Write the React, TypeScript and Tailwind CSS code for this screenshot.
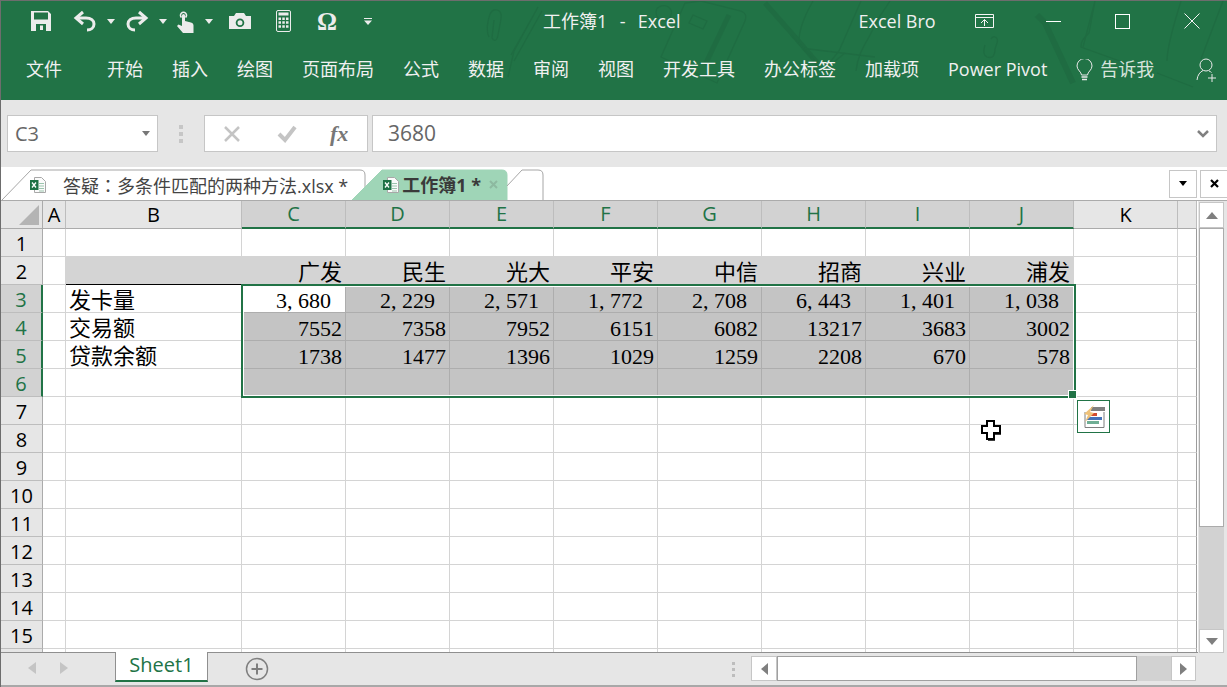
import React from 'react';

const uiFont = 'font-["Open_Sans","Noto_Sans_CJK_SC",sans-serif]';
const cellFont = 'font-["Liberation_Serif","Noto_Sans_CJK_SC",serif]';

const ribbonTabs = ['开始', '插入', '绘图', '页面布局', '公式', '数据', '审阅', '视图', '开发工具', '办公标签', '加载项', 'Power Pivot'];
const columns = ['C', 'D', 'E', 'F', 'G', 'H', 'I', 'J'];
const rowNumbers = [1, 2, 3, 4, 5, 6, 7, 8, 9, 10, 11, 12, 13, 14, 15];

const banks = ['广发', '民生', '光大', '平安', '中信', '招商', '兴业', '浦发'];
const cards = ['3, 680', '2, 229', '2, 571', '1, 772', '2, 708', '6, 443', '1, 401', '1, 038'];
const volume = ['7552', '7358', '7952', '6151', '6082', '13217', '3683', '3002'];
const loans = ['1738', '1477', '1396', '1029', '1259', '2208', '670', '578'];

const Caret = ({ className = '' }: { className?: string }) => (
  <svg width="8" height="5" viewBox="0 0 8 5" className={className}>
    <path d="M0 0h8L4 5z" fill="currentColor" />
  </svg>
);

const SaveIcon = () => (
  <svg width="20" height="20" viewBox="0 0 20 20">
    <path fillRule="evenodd" fill="#ececec" d="M0 0h17l3 3v17H0zM3 1.500v7h14v-7zM5 13v7h10v-7zM9 14.500h3V19H9z" />
  </svg>
);

const UndoIcon = () => (
  <svg width="24" height="22" viewBox="0 0 24 22" fill="none" stroke="#ececec" strokeWidth="3">
    <path d="M10 2 3 8l7 6" />
    <path d="M4 8h9c5 0 8 2.500 8 6s-3 6-7 6" />
  </svg>
);

const RedoIcon = () => (
  <svg width="24" height="22" viewBox="0 0 24 22" fill="none" stroke="#ececec" strokeWidth="3">
    <path d="m14 2 7 6-7 6" />
    <path d="M20 8h-9c-5 0-8 2.500-8 6s3 6 7 6" />
  </svg>
);

const TouchIcon = () => (
  <svg width="18" height="24" viewBox="0 0 18 24">
    <path d="M5.500 8.500a3 3 0 1 1 4 0" fill="none" stroke="#ececec" strokeWidth="1.600" />
    <path fill="#ececec" d="M6 6.500a1.500 1.500 0 0 1 3 0V12l6 1.500c1.500.4 2.500 1.500 2.500 3V24H7l-6-7 1.500-1.500L6 17z" />
  </svg>
);

const CameraIcon = () => (
  <svg width="22" height="18" viewBox="0 0 22 18">
    <path fillRule="evenodd" fill="#ececec" d="M0 4h5l2-3h8l2 3h5v13H0zM11 6.500a4.300 4.300 0 1 0 0 8.600 4.300 4.300 0 0 0 0-8.600zM11 8.300a2.500 2.500 0 1 1 0 5 2.500 2.500 0 0 1 0-5z" />
  </svg>
);

const CalculatorIcon = () => (
  <svg width="15" height="22" viewBox="0 0 15 22">
    <rect x=".5" y=".5" width="14" height="21" rx="1.500" fill="none" stroke="#ececec" />
    <path fill="#ececec" d="M2.500 2.500h10v3h-10zM2.500 7.500h2.500v2.500H2.500zM6.300 7.500h2.500v2.500H6.300zM10 7.500h2.500v2.500H10zM2.500 11.300h2.500v2.500H2.500zM6.300 11.300h2.500v2.500H6.300zM10 11.300h2.500v2.500H10zM2.500 15.200h2.500v2.500H2.500zM6.300 15.200h2.500v2.500H6.300zM10 15.200h2.500v2.500H10z" />
  </svg>
);

const ExcelDoc = () => (
  <svg width="16" height="16" viewBox="0 0 16 16" className="shrink-0">
    <path d="M4.500.5h7l4 4v11h-11z" fill="#fbfbfb" stroke="#a8a8a8" />
    <path d="M9 6.500h5M9 9h5M9 11.500h5M9 14h5" stroke="#9cc5ae" strokeWidth="1.200" />
    <rect x="0" y="3" width="8.500" height="10" fill="#1e7145" />
    <path d="m2 5.500 4 5m0-5-4 5" stroke="#fff" strokeWidth="1.300" />
  </svg>
);

const Watermark = () => (
  <svg className="absolute inset-0 pointer-events-none" width="1227" height="99" viewBox="0 0 1227 99" fill="none" stroke="#1f6c42" strokeWidth="1.300">
    <path d="M488 36c-4-8 0-26 5-27s8 2 7 9l-3 16c-1 6-4 7-6 3l2-18" />
    <path d="m537 6-24 44-6 26m29-68-26 46m31-44-28 50" />
    <path d="M658 6c8-4 14 2 12 8s-8 8-12 4-4-10 0-12z" />
    <path d="m684 2-24 54 56 26 28-62c2-6 0-8-4-10l-40-10z" />
    <path d="m728 14-24 50" strokeWidth="5" />
    <path d="m692 14 14 6-4 8-14-6z" />
    <path d="m764 2 30 34 24 28" strokeWidth="5" />
    <path d="m790 34 22 24 4 6" />
    <path d="M812 0c-8 14-14 30-14 40 0 4 4 8 10 8l66 8" />
    <path d="m860 0-22 50-16 20m22-18-22 18" />
    <path d="M889 0c-6 10-12 16-16 26-6 14-16 24-18 44" />
    <path d="M984 44c-2 6-2 10 2 12 6 2 8-2 8-8l2-6c2-6-4-8-6-4" />
    <path d="m1036 14 8 8 28 60" strokeWidth="6" />
    <path d="m1094 0-6 32c-6 6-8 8-8 14l72 26m-58-72-12 46" />
    <path d="M1180 0c-6 20-14 44-14 60m-10 12 36 14m30-86-22 58" />
  </svg>
);

const TabShapes = () => (
  <svg className="absolute left-0 top-0 pointer-events-none" width="560" height="33" viewBox="0 0 560 33">
    <path d="M1 33 30 3h329q5 0 5 5v25" fill="#fff" stroke="#a6a6a6" />
    <path d="M351 33 381 3h120q5 0 5 5v25z" fill="#9fd5b7" stroke="#9fd5b7" />
    <path d="m506 19 15-16h16q5 0 5 5v25" fill="#fff" stroke="#a6a6a6" />
  </svg>
);

const ColHeader = ({ label, w, active }: { label: string; w: string; active?: boolean }) => (
  <div
    className={`${w} shrink-0 border-r flex items-center justify-center text-[20px] ${
      active
        ? 'bg-[#d2d2d2] text-[#217346] border-[#bdbdbd] border-b-2 border-b-[#217346]'
        : 'bg-[#e6e6e6] text-black border-[#bdbdbd] border-b border-b-[#ababab]'
    }`}
  >
    {label}
  </div>
);

const Cell = ({ children, className = '' }: { children?: React.ReactNode; className?: string }) => (
  <div className={`shrink-0 h-full border-r border-b flex items-center overflow-hidden whitespace-nowrap pt-[4px] text-[22px] leading-none ${cellFont} ${className}`}>
    {children}
  </div>
);

const DataCells = ({ row }: { row: number }) => {
  if (row === 2) {
    return (
      <>
        {banks.map((b) => (
          <Cell key={b} className="w-[104px] bg-[#d4d4d4] border-[#d4d4d4] justify-end pr-[3px]">{b}</Cell>
        ))}
      </>
    );
  }
  if (row >= 3 && row <= 6) {
    const values = row === 3 ? cards : row === 4 ? volume : row === 5 ? loans : null;
    return (
      <>
        {columns.map((c, i) => (
          <Cell
            key={c}
            className={`w-[104px] justify-end border-[#adadad] ${row === 3 ? 'pr-[14px]' : 'pr-[3px]'} ${row === 3 && i === 0 ? 'bg-white' : 'bg-[#c4c4c4]'}`}
          >
            {values ? values[i] : ''}
          </Cell>
        ))}
      </>
    );
  }
  return (
    <>
      {columns.map((c) => (
        <Cell key={c} className="w-[104px] border-[#d4d4d4]" />
      ))}
    </>
  );
};

const rowLabels: Record<number, string> = { 3: '发卡量', 4: '交易额', 5: '贷款余额' };

const SheetRow = ({ row, label }: { row: number; label?: boolean }) => {
  const active = row >= 3 && row <= 6;
  return (
    <div className="flex h-[28px]">
      <div
        className={`w-[42px] shrink-0 flex items-center justify-center border-b pt-[2px] text-[20px] ${uiFont} ${
          active
            ? 'bg-[#d2d2d2] text-[#217346] border-b-[#bdbdbd] border-r-2 border-r-[#217346]'
            : 'bg-[#e6e6e6] text-black border-b-[#bdbdbd] border-r border-r-[#ababab]'
        }`}
      >
        {label ? row : ''}
      </div>
      <Cell className={`w-[23px] border-[#d4d4d4]`} />
      <Cell
        className={`w-[176px] pl-[3px] ${
          row === 2 ? 'bg-[#d4d4d4] border-r-[#d4d4d4] border-b-black' : 'border-[#d4d4d4]'
        }`}
      >
        {rowLabels[row]}
      </Cell>
      <DataCells row={row} />
      <Cell className="w-[104px] border-[#d4d4d4]" />
      <Cell className="w-[19px] border-[#d4d4d4] border-r-[#9c9c9c]" />
    </div>
  );
};

export default function App() {
  return (
    <div className={`w-[1227px] h-[687px] overflow-hidden flex flex-col bg-[#e6e6e6] border-l border-t border-[#6d6d6d] ${uiFont}`}>
      {/* Ribbon */}
      <div className="relative h-[99px] shrink-0 bg-[#217346] text-[#f0f0f0] text-[18px]">
        <Watermark />
        <div className="relative flex items-center h-[40px]">
          <div className="w-[30px]" />
          <SaveIcon />
          <div className="w-[22px]" />
          <UndoIcon />
          <Caret className="ml-[10px] text-[#ececec]" />
          <div className="w-[10px]" />
          <RedoIcon />
          <Caret className="ml-[10px] text-[#ececec]" />
          <div className="w-[9px]" />
          <TouchIcon />
          <Caret className="ml-[11px] text-[#ececec]" />
          <div className="w-[16px]" />
          <CameraIcon />
          <div className="w-[25px]" />
          <CalculatorIcon />
          <div className="w-[26px]" />
          <span className={`w-[22px] text-[25px] leading-none text-[#ececec] font-bold ${cellFont}`}>Ω</span>
          <div className="w-[25px]" />
          <svg width="8" height="7" viewBox="0 0 8 7">
            <path d="M0 0h8v1H0zM0 2.500h8L4 7z" fill="#ececec" />
          </svg>
          <span className="ml-[171px] whitespace-pre">工作簿1<span className="mx-[3px]">  -  </span>Excel</span>
          <span className="ml-[178px]">Excel Bro</span>
          <svg className="ml-[39px]" width="20" height="15" viewBox="0 0 20 15" fill="none" stroke="#f5f5f5">
            <path d="M.5.500h18v13H.5zM.5 3.500h18M9.500 12V5.500M6 9l3.500-3.500L13 9" />
          </svg>
          <div className="ml-[51px] w-[15px] h-px bg-white" />
          <div className="ml-[54px] w-[15px] h-[15px] border border-white" />
          <svg className="ml-[54px]" width="16" height="16" viewBox="0 0 16 16" stroke="#f5f5f5">
            <path d="m.5.500 15 15m0-15-15 15" />
          </svg>
        </div>
        <div className="relative flex items-center h-[59px] pb-[2px]">
          <span className="ml-[25px]">文件</span>
          <div className="ml-[45px] flex gap-[29px]">
            {ribbonTabs.map((t) => (
              <span key={t} className="whitespace-nowrap">{t}</span>
            ))}
          </div>
          <svg className="ml-[29px]" width="17" height="22" viewBox="0 0 17 22" fill="none" stroke="#e9e9e9">
            <path d="M5.500 16c0-3-4.500-5-4.500-9a7.500 7.500 0 0 1 15 0c0 4-4.500 6-4.500 9z" />
            <path d="M5.500 18h6M6 20.500h5" strokeWidth="1.500" />
          </svg>
          <span className="ml-[7px] text-[#d7e4dc]">告诉我</span>
          <svg className="ml-[42px]" width="22" height="24" viewBox="0 0 22 24" fill="none" stroke="#e9e9e9">
            <circle cx="10" cy="7" r="6" />
            <path d="M1 22c.5-5 3-8 6-9.500M13 13c1 .3 2 1 2.500 1.500M16 16v8M12 20h8" />
          </svg>
        </div>
      </div>

      {/* Formula bar */}
      <div className="h-[67px] shrink-0 flex items-center pl-[6px] pr-[10px] text-[20px] text-[#666]">
        <div className="w-[151px] h-[37px] bg-white border border-[#c6c6c6] flex items-center justify-between pl-[7px] pr-[7px]">
          <span>C3</span>
          <Caret className="text-[#777]" />
        </div>
        <div className="w-[46px] flex flex-col items-center gap-[3px]">
          <div className="w-[4px] h-[4px] bg-[#c6c6c6]" />
          <div className="w-[4px] h-[4px] bg-[#c6c6c6]" />
          <div className="w-[4px] h-[4px] bg-[#c6c6c6]" />
        </div>
        <div className="w-[164px] h-[37px] bg-white border border-[#c6c6c6] flex items-center">
          <svg className="ml-[18px]" width="18" height="18" viewBox="0 0 18 18" stroke="#c4c4c4" strokeWidth="2.500">
            <path d="m2 2 14 14m0-14L2 16" />
          </svg>
          <svg className="ml-[36px]" width="20" height="18" viewBox="0 0 20 18" fill="none" stroke="#c4c4c4" strokeWidth="4">
            <path d="m2 9 6 6L18 2" />
          </svg>
          <span className={`ml-[33px] text-[22px] font-bold italic leading-none text-[#777] ${cellFont}`}>fx</span>
        </div>
        <div className="ml-[4px] flex-1 h-[37px] bg-white border border-[#c6c6c6] flex items-center justify-between pl-[15px] pr-[7px] text-[21px]">
          <span>3680</span>
          <svg width="12" height="8" viewBox="0 0 12 8" fill="none" stroke="#808080" strokeWidth="2.500">
            <path d="m1 1 5 5 5-5" />
          </svg>
        </div>
      </div>

      {/* Workbook tabs */}
      <div className="relative h-[34px] shrink-0 bg-white border-b border-[#ababab]">
        <TabShapes />
        <div className="relative flex items-center h-full text-[18px] text-[#444]">
          <div className="ml-[29px] mt-[2px]"><ExcelDoc /></div>
          <span className="ml-[17px] mt-[4px] whitespace-nowrap">
            答疑<span className='font-["Noto_Sans_CJK_TC",sans-serif]'>：</span>多条件匹配的两种方法.xlsx *
          </span>
          <div className="ml-[35px] mt-[2px]"><ExcelDoc /></div>
          <span className="ml-[3px] mt-[4px] font-bold text-[#3a3a3a] whitespace-nowrap">工作簿1 *</span>
          <svg className="ml-[8px] mt-[2px]" width="9" height="9" viewBox="0 0 9 9" stroke="#8db9a0" strokeWidth="2">
            <path d="m1 1 7 7m0-7-7 7" />
          </svg>
          <div className="ml-auto mr-[3px] w-[28px] h-[28px] bg-white border border-[#c6c6c6] flex items-center justify-center">
            <Caret className="text-black" />
          </div>
          <div className="mr-[-1px] w-[28px] h-[28px] bg-white border border-[#c6c6c6] flex items-center justify-center">
            <svg width="9" height="9" viewBox="0 0 9 9" stroke="#000" strokeWidth="2.200">
              <path d="m1 1 7 7m0-7-7 7" />
            </svg>
          </div>
        </div>
      </div>

      {/* Sheet + vertical scrollbar */}
      <div className="h-[452px] shrink-0 flex bg-white">
        <div className="w-[1197px] shrink-0 flex flex-col overflow-hidden border-b border-[#8f8f8f]">
          <div className="flex h-[28px] shrink-0">
            <div className="w-[42px] shrink-0 bg-[#e6e6e6] border-r border-b border-[#ababab] flex items-end justify-end pr-[3px] pb-[3px]">
              <svg width="20" height="20" viewBox="0 0 20 20">
                <path d="M20 0v20H0z" fill="#b4b4b4" />
              </svg>
            </div>
            <ColHeader label="A" w="w-[23px]" />
            <ColHeader label="B" w="w-[176px]" />
            {columns.map((c) => (
              <ColHeader key={c} label={c} w="w-[104px]" active />
            ))}
            <ColHeader label="K" w="w-[104px]" />
            <ColHeader label="" w="w-[19px]" />
          </div>
          <div className="relative flex-1 overflow-hidden">
            {rowNumbers.map((r) => (
              <SheetRow key={r} row={r} label />
            ))}
            <SheetRow row={16} />

            {/* selection */}
            <div className="absolute left-[240px] top-[55px] w-[835px] h-[114px] border-2 border-[#217346] pointer-events-none">
              <div className="w-full h-full border border-white" />
              <div className="absolute right-[-3px] bottom-[-3px] w-[7px] h-[7px] bg-[#217346] border border-white box-content" />
            </div>

            {/* quick analysis */}
            <div className="absolute left-[1076px] top-[171px] w-[33px] h-[33px] bg-white border border-[#217346] flex items-center justify-center">
              <svg width="22" height="24" viewBox="0 0 22 24">
                <path d="M2 7v15.500h19V7" fill="#fff" stroke="#7f7f7f" />
                <path d="M8 2h14v4H8z" fill="#7f7f7f" />
                <path d="M8 8h6v3H8z" fill="#d24b2e" />
                <path d="M4 12h15v3H4z" fill="#4472b8" />
                <path d="M4 16h12v3H4z" fill="#6fae94" />
                <path d="M11 0 1 9l4 1-3 7 9-9-4-1 4-7z" fill="#efc27a" />
              </svg>
            </div>

            {/* excel cell pointer */}
            <svg className="absolute left-[979px] top-[190px]" width="22" height="22" viewBox="0 0 22 22">
              <path d="M7 2h7v5h6v7h-6v6H7v-6H2V7h5z" fill="#fff" stroke="#000" strokeWidth="2" />
              <path d="M15 21h-7M21 15h-6" stroke="#000" strokeWidth="1.500" />
            </svg>
          </div>
        </div>

        <div className="flex-1 flex flex-col items-start pl-[1px] pt-[1px] bg-[#e6e6e6]">
          <div className="w-[25px] h-[26px] bg-white border border-[#c6c6c6] flex items-center justify-center">
            <svg width="12" height="7" viewBox="0 0 12 7"><path d="M6 0l6 7H0z" fill="#7f7f7f" /></svg>
          </div>
          <div className="w-[25px] flex-1 bg-[#d2d2d2] flex flex-col">
            <div className="h-[299px] bg-white border border-[#ababab]" />
          </div>
          <div className="w-[25px] h-[24px] bg-white border border-[#c6c6c6] flex items-center justify-center">
            <svg width="12" height="7" viewBox="0 0 12 7"><path d="M0 0h12L6 7z" fill="#7f7f7f" /></svg>
          </div>
        </div>
      </div>

      {/* Sheet tabs + horizontal scrollbar */}
      <div className="h-[34px] shrink-0 flex items-start border-b-2 border-[#a8a8a8] relative">
        <svg className="ml-[27px] mt-[9px]" width="8" height="12" viewBox="0 0 8 12"><path d="M8 0v12L0 6z" fill="#c4c4c4" /></svg>
        <svg className="ml-[24px] mt-[9px]" width="8" height="12" viewBox="0 0 8 12"><path d="M0 0v12l8-6z" fill="#c4c4c4" /></svg>
        <div className="ml-[47px] mt-[-1px] w-[93px] h-[30px] bg-white border-x border-[#8f8f8f] border-b-2 border-b-[#217346] flex items-center justify-center pb-[3px] text-[20px] text-[#217346]">
          Sheet1
        </div>
        <svg className="ml-[37px] mt-[4px]" width="24" height="24" viewBox="0 0 24 24" fill="none" stroke="#7f7f7f" strokeWidth="1.500">
          <circle cx="12" cy="12" r="10.500" />
          <path d="M12 6.500v11M6.500 12h11" strokeWidth="2" />
        </svg>
        <div className="ml-[463px] mt-[9px] flex flex-col gap-[3px]">
          <div className="w-[3px] h-[3px] bg-[#bdbdbd]" />
          <div className="w-[3px] h-[3px] bg-[#bdbdbd]" />
          <div className="w-[3px] h-[3px] bg-[#bdbdbd]" />
        </div>
        <div className="ml-[16px] mt-[3px] w-[445px] h-[25px] flex bg-[#d2d2d2]">
          <div className="w-[26px] bg-white border border-[#c6c6c6] flex items-center justify-center">
            <svg width="7" height="12" viewBox="0 0 7 12"><path d="M7 0v12L0 6z" fill="#7f7f7f" /></svg>
          </div>
          <div className="w-[360px] bg-white border border-[#a0a0a0]" />
          <div className="ml-auto w-[25px] bg-white border border-[#c6c6c6] flex items-center justify-center">
            <svg width="7" height="12" viewBox="0 0 7 12"><path d="M0 0v12l7-6z" fill="#7f7f7f" /></svg>
          </div>
        </div>
      </div>
    </div>
  );
}
